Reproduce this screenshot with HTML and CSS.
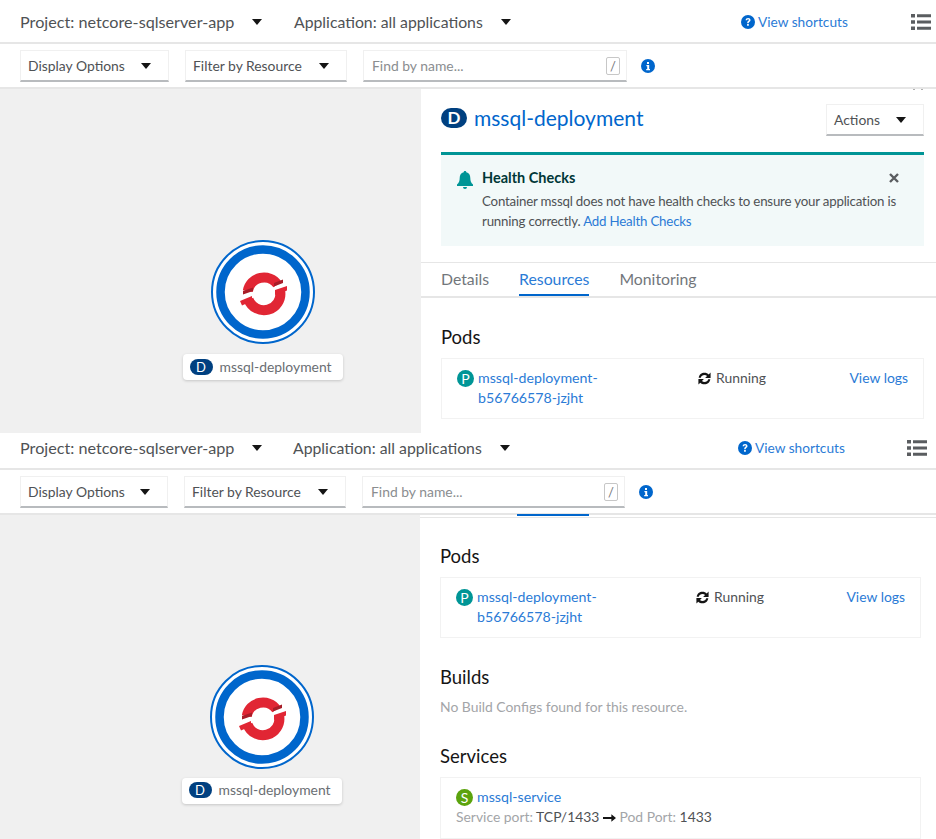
FILE: index.html
```html
<!doctype html>
<html lang="en">
  <head>
    <meta charset="UTF-8" />
    <meta name="viewport" content="width=device-width, initial-scale=1.0" />
    <title>Topology</title>
    <link rel="stylesheet" href="styles.css">
  </head>
  <body>
    <svg class="defs" width="0" height="0" aria-hidden="true">
      <symbol id="caret" viewBox="0 0 10 6"><path d="M0 0h10L5 6z" /></symbol>
      <symbol id="list" viewBox="0 0 20 16">
        <path d="M0 0h4v3.400H0zM6 .2h14v3H6zM0 6.300h4v3.400H0zM6 6.500h14v3H6zM0 12.600h4V16H0zM6 12.800h14v3H6z" />
      </symbol>
      <symbol id="help" viewBox="0 0 14 14">
        <circle cx="7" cy="7" r="7" />
        <path d="M4.600 5.200C4.700 3.700 5.700 3 7.100 3c1.400 0 2.400.8 2.400 2 0 1-.6 1.500-1.200 1.900-.5.3-.6.5-.6 1v.3H6.200v-.5c0-.8.3-1.200.9-1.600.5-.3.800-.6.800-1.100 0-.5-.3-.8-.8-.8-.6 0-.9.4-1 1zM6.100 9h1.700v1.700H6.100z" fill="#fff" />
      </symbol>
      <symbol id="info" viewBox="0 0 14 14">
        <circle cx="7" cy="7" r="7" />
        <path d="M6 3h2v2H6zM5.400 6h2.800v4H9v1.300H5.200V10h1V7.300h-.8z" fill="#fff" />
      </symbol>
      <symbol id="sync" viewBox="0 0 16 16">
        <path d="M1.800 7.200C2.200 3.900 4.800 1.800 8 1.800c1.800 0 3.400.7 4.500 1.800L14.500 1.600v5.800H8.700l2-2c-.7-.7-1.600-1.100-2.700-1.100-2 0-3.500 1.100-3.900 2.900zM14.200 8.800c-.4 3.300-3 5.400-6.200 5.400-1.800 0-3.400-.7-4.500-1.800L1.500 14.400V8.600h5.800l-2 2c.7.700 1.600 1.100 2.700 1.100 2 0 3.500-1.100 3.900-2.900z" />
      </symbol>
      <symbol id="logo" viewBox="0 0 104 104">
        <circle cx="52" cy="52" r="51" fill="#fff" stroke="#06c" stroke-width="2" />
        <circle cx="52" cy="52" r="42.500" fill="#fff" stroke="#06c" stroke-width="8.500" />
        <g fill="none" stroke="#e12634" stroke-width="10">
          <path d="M36.750 51.100A16.500 16.500 0 0 1 66.500 44.500" />
          <path d="M69.200 51.100A16.500 16.500 0 0 1 37.500 59.600" />
        </g>
        <path d="M64 50l12-4v4.500L64 55zM29 61l12-5v5l-10 4.500z" fill="#e12634" />
        <path d="M32 51l10-3.500v3.500L32 54.500zM63 43l9-3.500v3.500l-9 3.500z" fill="#a81d28" />
      </symbol>
    </svg>

    <section class="shot shot-first">
      <header class="topbar">
        <span class="project">Project: netcore-sqlserver-app<svg class="caret"><use href="#caret" /></svg></span>
        <span class="application">Application: all applications<svg class="caret"><use href="#caret" /></svg></span>
        <a class="shortcuts"><svg class="icon-help"><use href="#help" /></svg>View shortcuts</a>
        <svg class="icon-list"><use href="#list" /></svg>
      </header>
      <div class="toolbar">
        <span class="dropdown display-options">Display Options<svg class="caret"><use href="#caret" /></svg></span>
        <span class="dropdown filter-resource">Filter by Resource<svg class="caret"><use href="#caret" /></svg></span>
        <span class="search"><span class="placeholder">Find by name...</span><kbd class="slash">/</kbd></span>
        <svg class="icon-info"><use href="#info" /></svg>
      </div>
      <div class="main">
        <div class="canvas">
          <svg class="logo"><use href="#logo" /></svg>
          <span class="node-label"><span class="badge badge-d">D</span>mssql-deployment</span>
        </div>
        <aside class="panel">
          <span class="panel-clip"></span>
          <div class="panel-head">
            <h1 class="panel-title"><span class="badge badge-d badge-title">D</span>mssql-deployment</h1>
            <span class="dropdown actions">Actions<svg class="caret"><use href="#caret" /></svg></span>
          </div>
          <div class="alert">
            <svg class="bell" viewBox="0 0 16 18"><path d="M8 0c.8 0 1.300.5 1.300 1.300 2.800.6 4 2.700 4 5.700 0 3 .8 5 2.700 6.500V15H0v-1.500C1.900 12 2.700 10 2.700 7c0-3 1.200-5.100 4-5.700C6.700.5 7.200 0 8 0zM6 16h4a2 2 0 0 1-4 0z" /></svg>
            <div class="alert-body">
              <h2 class="alert-title">Health Checks</h2>
              <p class="alert-text">Container mssql does not have health checks to ensure your application is running correctly. <a class="link">Add Health Checks</a></p>
            </div>
            <svg class="alert-close" viewBox="0 0 10 10"><path d="M1 1l8 8M9 1L1 9" /></svg>
          </div>
          <nav class="tabs">
            <span class="tab">Details</span>
            <span class="tab tab-active">Resources</span>
            <span class="tab">Monitoring</span>
          </nav>
          <h3 class="section-title pods-title">Pods</h3>
          <div class="card pod-row">
            <span class="pod-name"><span class="badge badge-p">P</span><a class="link">mssql-deployment-<br />b56766578-jzjht</a></span>
            <span class="pod-status"><svg class="icon-sync"><use href="#sync" /></svg>Running</span>
            <a class="link pod-logs">View logs</a>
          </div>
        </aside>
      </div>
    </section>

    <section class="shot shot-second">
      <header class="topbar">
        <span class="project">Project: netcore-sqlserver-app<svg class="caret"><use href="#caret" /></svg></span>
        <span class="application">Application: all applications<svg class="caret"><use href="#caret" /></svg></span>
        <a class="shortcuts"><svg class="icon-help"><use href="#help" /></svg>View shortcuts</a>
        <svg class="icon-list"><use href="#list" /></svg>
      </header>
      <div class="toolbar">
        <span class="dropdown display-options">Display Options<svg class="caret"><use href="#caret" /></svg></span>
        <span class="dropdown filter-resource">Filter by Resource<svg class="caret"><use href="#caret" /></svg></span>
        <span class="search"><span class="placeholder">Find by name...</span><kbd class="slash">/</kbd></span>
        <svg class="icon-info"><use href="#info" /></svg>
      </div>
      <div class="main">
        <div class="canvas">
          <svg class="logo"><use href="#logo" /></svg>
          <span class="node-label"><span class="badge badge-d">D</span>mssql-deployment</span>
        </div>
        <aside class="panel">
          <div class="tab-strip"><span class="tab-strip-active"></span></div>
          <h3 class="section-title pods-title">Pods</h3>
          <div class="card pod-row">
            <span class="pod-name"><span class="badge badge-p">P</span><a class="link">mssql-deployment-<br />b56766578-jzjht</a></span>
            <span class="pod-status"><svg class="icon-sync"><use href="#sync" /></svg>Running</span>
            <a class="link pod-logs">View logs</a>
          </div>
          <h3 class="section-title builds-title">Builds</h3>
          <p class="muted empty-note">No Build Configs found for this resource.</p>
          <h3 class="section-title services-title">Services</h3>
          <div class="card service-card">
            <span class="pod-name"><span class="badge badge-s">S</span><a class="link">mssql-service</a></span>
            <p class="service-port"><span class="muted">Service port:</span> TCP/1433 <svg class="arrow" viewBox="0 0 14 8"><path d="M0 3h9V0l5 4-5 4V5H0z" /></svg> <span class="muted">Pod Port:</span> 1433</p>
          </div>
        </aside>
      </div>
    </section>
  </body>
</html>
```

FILE: styles.css
```css
html,
body {
  margin: 0;
  padding: 0;
}
body {
  width: 936px;
  height: 839px;
  overflow: hidden;
  background: #fff;
  color: #4f5255;
  font-family: Lato, "Liberation Sans", sans-serif;
  font-size: 13.9px;
  line-height: 20px;
  white-space: nowrap;
}
h1,
h2,
h3,
p {
  margin: 0;
  font-weight: 400;
}
svg {
  flex: none;
}
.defs {
  position: absolute;
}
.shot {
  display: flex;
  flex-direction: column;
  overflow: hidden;
}
.shot-first {
  height: 433px;
}
.shot-second {
  height: 406px;
}

/* top bar */
.topbar {
  display: flex;
  align-items: center;
  box-sizing: border-box;
  height: 44px;
  padding: 1px 0 0 20px;
  border-bottom: 2px solid #e6e6e6;
}
.shot-second .topbar {
  height: 37px;
  padding: 0 0 6px 20px;
}
.project {
  display: flex;
  align-items: center;
  width: 274px;
  font-size: 16.2px;
}
.shot-second .project {
  width: 273px;
}
.project .caret {
  margin-left: 18px;
}
.application {
  display: flex;
  align-items: center;
  width: 447px;
  font-size: 15.8px;
}
.application .caret {
  margin-left: 18px;
}
.shot-second .application {
  width: 445px;
}
.caret {
  width: 10px;
  height: 6px;
  fill: #151515;
}
.shortcuts {
  display: flex;
  align-items: center;
  width: 107px;
  color: #2b7bd6;
  font-size: 13.7px;
}
.icon-help {
  width: 14px;
  height: 14px;
  margin-right: 3px;
  fill: #06c;
}
.icon-list {
  width: 20px;
  height: 16px;
  margin-left: 63px;
  fill: #5a5d60;
}
.shot-second .icon-list {
  margin-left: 62px;
}

/* toolbar */
.toolbar {
  display: flex;
  align-items: center;
  box-sizing: border-box;
  height: 45px;
  padding-left: 20px;
  border-bottom: 2px solid #e6e6e6;
}
.dropdown {
  display: flex;
  align-items: center;
  justify-content: space-between;
  box-sizing: border-box;
  height: 32px;
  padding: 1px 17px 0 7px;
  border: 1px solid #f0f0f0;
  border-bottom: 2px solid #b8bbbe;
}
.display-options {
  width: 149px;
  margin-right: 16px;
}
.shot-second .display-options {
  width: 148px;
}
.filter-resource {
  width: 162px;
  margin-right: 16px;
}
.search {
  display: flex;
  align-items: center;
  justify-content: space-between;
  box-sizing: border-box;
  width: 264px;
  height: 32px;
  padding: 1px 6px 0 8px;
  border: 1px solid #f0f0f0;
  border-bottom: 2px solid #b8bbbe;
}
.shot-second .search {
  width: 263px;
}
.placeholder {
  color: #8a8d90;
}
.slash {
  box-sizing: border-box;
  width: 14px;
  height: 18px;
  border: 1px solid #c7c7c7;
  border-radius: 2px;
  color: #72767b;
  font-family: Lato, sans-serif;
  font-size: 13px;
  line-height: 16px;
  text-align: center;
}
.icon-info {
  width: 14px;
  height: 14px;
  margin-left: 14px;
  fill: #06c;
}

/* canvas */
.main {
  display: flex;
  flex: 1;
  min-height: 0;
}
.canvas {
  display: flex;
  flex-direction: column;
  align-items: center;
  box-sizing: border-box;
  width: 421px;
  padding: 151px 0 0 104px;
  background: #f0f0f0;
}
.shot-second .canvas {
  width: 420px;
  padding-top: 150px;
  padding-left: 103px;
}
.logo {
  width: 104px;
  height: 104px;
}
.node-label {
  display: flex;
  align-items: center;
  box-sizing: border-box;
  width: 160px;
  height: 26px;
  margin-top: 10px;
  padding: 0 0 1px 7px;
  border-radius: 4px;
  background: #fff;
  color: #6a6e73;
  box-shadow: 0 1px 3px rgba(0, 0, 0, 0.18);
}
.shot-second .node-label {
  margin-top: 9px;
  padding-bottom: 2px;
}
.badge {
  display: inline-flex;
  align-items: center;
  justify-content: center;
  flex: none;
  color: #fff;
  font-size: 13px;
}
.badge-d {
  width: 23px;
  height: 16px;
  margin-right: 7px;
  border-radius: 8px;
  background: #004080;
}
.badge-title {
  width: 26px;
  height: 20px;
  margin-right: 7px;
  border-radius: 10px;
  font-size: 17px;
  font-weight: 700;
}
.badge-p {
  width: 17px;
  height: 17px;
  margin-right: 4px;
  border-radius: 50%;
  background: #009596;
  font-size: 14px;
}
.badge-s {
  width: 17px;
  height: 17px;
  margin-right: 4px;
  border-radius: 50%;
  background: #5ba30d;
  font-size: 14px;
}

/* side panel */
.panel {
  position: relative;
  flex: 1;
  box-sizing: border-box;
  min-width: 0;
  padding: 0 12px 0 20px;
}
.shot-second .panel {
  padding-right: 15px;
}
.panel-clip {
  position: absolute;
  top: 0;
  right: 13px;
  width: 6px;
  height: 1px;
  border-left: 2px solid #b0b0b0;
  border-right: 2px solid #b0b0b0;
}
.panel-head {
  display: flex;
  align-items: flex-start;
  justify-content: space-between;
  height: 63px;
  padding-top: 15px;
  box-sizing: border-box;
}
.panel-title {
  display: flex;
  align-items: center;
  height: 28px;
  color: #06c;
  font-size: 21px;
}
.actions {
  width: 98px;
  height: 32px;
  padding-right: 17px;
}
.alert {
  display: flex;
  box-sizing: border-box;
  height: 94px;
  padding: 13px 25px 0 16px;
  border-top: 3px solid #009596;
  background: #f2f9f9;
}
.bell {
  width: 16px;
  height: 18px;
  margin: 3px 9px 0 0;
  fill: #009596;
}
.alert-body {
  flex: 1;
  min-width: 0;
}
.alert-title {
  margin-bottom: 3px;
  color: #003737;
  font-size: 14.5px;
  font-weight: 700;
}
.alert-text {
  width: 420px;
  white-space: normal;
  font-size: 13.3px;
  letter-spacing: -0.2px;
}
.alert-close {
  width: 10px;
  height: 10px;
  margin-top: 5px;
  stroke: #5a5d60;
  stroke-width: 2.4;
}
.link {
  color: #2b7bd6;
}
.tabs {
  display: flex;
  gap: 30px;
  box-sizing: border-box;
  height: 36px;
  margin: 16px -12px 0 -20px;
  padding-left: 20px;
  border-top: 1px solid #e6e6e6;
  border-bottom: 2px solid #e6e6e6;
  font-size: 15.8px;
}
.tab {
  display: block;
  height: 33px;
  box-sizing: border-box;
  padding-top: 6px;
  color: #72767b;
}
.tab-active {
  color: #2b7bd6;
  border-bottom: 2px solid #06c;
}
.tab-strip {
  height: 3px;
  margin: 0 -15px 0 -20px;
  border-bottom: 1px solid #e6e6e6;
}
.tab-strip-active {
  display: block;
  width: 72px;
  height: 2px;
  margin: -1px 0 0 97px;
  background: #06c;
}
.section-title {
  color: #151515;
  font-size: 18.5px;
  line-height: 24px;
}
.pods-title {
  margin: 27px 0 9px;
}
.shot-second .pods-title {
  margin: 26px 0 9px;
}
.card {
  box-sizing: border-box;
  border: 1px solid #f2f2f2;
}
.pod-row {
  display: flex;
  height: 61px;
  padding: 9px 15px 0;
}
.pod-name {
  display: flex;
  align-items: flex-start;
  width: 240px;
}
.shot-second .pod-name {
  width: 239px;
}
.pod-name .link {
  font-size: 14.2px;
}
.pod-name .badge {
  margin-top: 2px;
}
.pod-status {
  display: flex;
  align-items: flex-start;
}
.icon-sync {
  width: 15px;
  height: 15px;
  margin: 3px 4px 0 0;
  fill: #151515;
}
.pod-logs {
  margin-left: auto;
}
.builds-title {
  margin-top: 27px;
}
.empty-note {
  margin-top: 8px;
}
.muted {
  color: #a3a5a8;
}
.services-title {
  margin-top: 27px;
}
.service-card {
  height: 62px;
  margin-top: 9px;
  padding: 9px 15px 0;
}
.service-port {
  display: block;
}
.arrow {
  width: 13px;
  height: 8px;
  fill: #151515;
}
```
